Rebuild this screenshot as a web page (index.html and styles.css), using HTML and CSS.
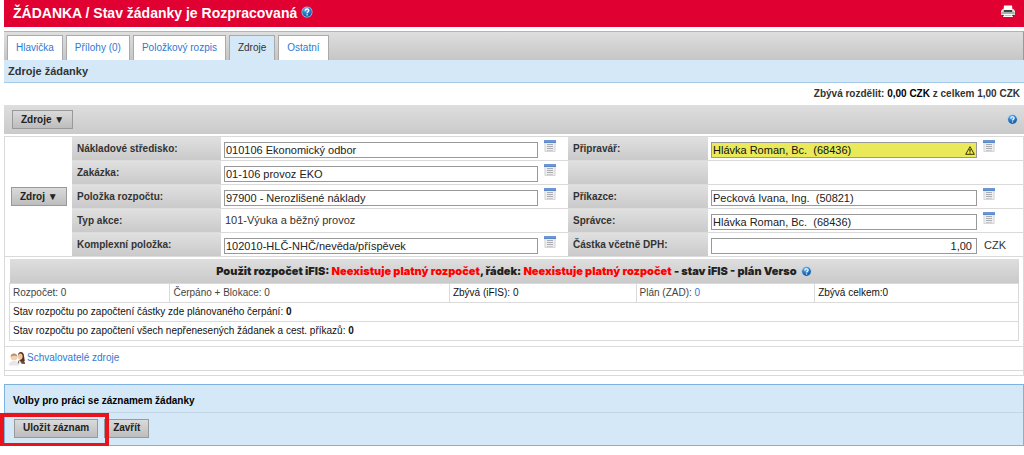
FILE: index.html
```html
<!DOCTYPE html>
<html lang="cs">
<head>
<meta charset="utf-8">
<title>Žádanka</title>
<link rel="stylesheet" href="styles.css">
</head>
<body>
<svg class="defs" aria-hidden="true">
  <defs>
    <radialGradient id="ball" cx="40%" cy="25%" r="75%">
      <stop offset="0" stop-color="#7fc0f4"/><stop offset="0.5" stop-color="#2b7fce"/><stop offset="1" stop-color="#135299"/>
    </radialGradient>
    <symbol id="help" viewBox="0 0 12 12">
      <circle cx="6" cy="6" r="5.5" fill="#a9cdea"/>
      <circle cx="6" cy="6" r="4.8" fill="url(#ball)"/>
      <path d="M4.2 4.8C4.2 2.4 7.9 2.5 7.8 4.6C7.7 5.8 6.1 5.7 6.1 7.2M6.1 8.2V9.4" fill="none" stroke="#fff" stroke-width="1.3"/>
    </symbol>
    <symbol id="list" viewBox="0 0 12 12">
      <path d="M0.5 0.5H11.5V11.5H0.5Z" fill="#eeeeec"/>
      <path d="M1 3V11.5H11V3" fill="none" stroke="#d6d6d6"/>
      <path d="M0 0H12V3H0Z" fill="#5c88cb"/><path d="M0 1H12" stroke="#7ca4dc"/>
      <path d="M3 4.5H9M3 6.5H9M3 8.5H9" stroke="#a9acb3"/><path d="M3 10.5H9" stroke="#c9c9c9"/>
    </symbol>
  </defs>
</svg>
<main class="page">
  <header class="title-bar">
    <h1>ŽÁDANKA / Stav žádanky je Rozpracovaná</h1>
    <svg class="help"><use href="#help"/></svg>
    <svg class="printer" viewBox="0 0 14 13" role="img" aria-label="Tisk">
      <path d="M3 0.5H11L11.6 5H2.4Z" fill="#fff"/>
      <path d="M1.5 4H3V5.5H11V4H12.5L14 6V10H0V6Z" fill="#d9dddb"/>
      <path d="M2.8 5H11.2V7H2.8Z" fill="#34493f"/><path d="M0.5 8H13.5" stroke="#70837a"/>
      <path d="M3 9H11L12 12H2Z" fill="#fff"/><path d="M1 10.5H2.5M11.5 10.5H13" stroke="#333"/>
      <path d="M3.5 10.5H10.5" stroke="#b9c0bc"/>
    </svg>
  </header>

  <nav class="tabs">
    <a href="#">Hlavička</a>
    <a href="#">Přílohy (0)</a>
    <a href="#">Položkový rozpis</a>
    <a href="#" class="active" aria-current="page">Zdroje</a>
    <a href="#">Ostatní</a>
  </nav>
  <h2 class="section-title">Zdroje žádanky</h2>
  <p class="remaining">Zbývá rozdělit: <b>0,00 CZK</b> z celkem 1,00 CZK</p>

  <div class="toolbar">
    <button type="button" class="btn">Zdroje ▼</button>
    <svg class="help small"><use href="#help"/></svg>
  </div>

  <section class="sources">
    <div class="form">
      <div class="menu-cell"><button type="button" class="btn">Zdroj ▼</button></div>
      <div class="fields">
        <label class="label" for="f1">Nákladové středisko:</label>
        <div class="value"><input id="f1" type="text" value="010106 Ekonomický odbor"><svg class="list"><use href="#list"/></svg></div>
        <label class="label" for="f2">Připravář:</label>
        <div class="value person"><span class="warned"><input id="f2" class="warning" type="text" value="Hlávka Roman, Bc.  (68436)"><svg class="warn" viewBox="0 0 10 9"><path d="M5 0.7L9.3 8.3H0.7Z" fill="#f4ee3c" stroke="#333010" stroke-linejoin="round"/><path d="M5 3V5.8M5 6.4V7.6" stroke="#222" stroke-width="1.2"/></svg></span><svg class="list"><use href="#list"/></svg></div>

        <label class="label" for="f3">Zakázka:</label>
        <div class="value"><input id="f3" type="text" value="01-106 provoz EKO"><svg class="list"><use href="#list"/></svg></div>
        <div class="label"></div>
        <div class="value person"></div>

        <label class="label" for="f4">Položka rozpočtu:</label>
        <div class="value"><input id="f4" type="text" value="97900 - Nerozlišené náklady"><svg class="list"><use href="#list"/></svg></div>
        <label class="label" for="f5">Příkazce:</label>
        <div class="value person"><input id="f5" type="text" value="Pecková Ivana, Ing.  (50821)"><svg class="list"><use href="#list"/></svg></div>

        <div class="label">Typ akce:</div>
        <div class="value plain">101-Výuka a běžný provoz</div>
        <label class="label" for="f6">Správce:</label>
        <div class="value person"><input id="f6" type="text" value="Hlávka Roman, Bc.  (68436)"><svg class="list"><use href="#list"/></svg></div>

        <label class="label" for="f7">Komplexní položka:</label>
        <div class="value"><input id="f7" type="text" value="102010-HLČ-NHČ/nevěda/příspěvek"><svg class="list"><use href="#list"/></svg></div>
        <label class="label" for="f8">Částka včetně DPH:</label>
        <div class="value person"><input id="f8" class="amount" type="text" value="1,00"><span class="unit">CZK</span></div>
      </div>
    </div>

    <div class="budget-wrap">
      <table class="budget">
        <colgroup><col class="c1"><col class="c2"><col class="c3"><col class="c4"><col></colgroup>
        <thead>
          <tr><th colspan="5">Použit rozpočet iFIS: <em>Neexistuje platný rozpočet</em>, řádek: <em>Neexistuje platný rozpočet</em> - stav iFIS - plán Verso <svg class="help small"><use href="#help"/></svg></th></tr>
        </thead>
        <tbody>
          <tr>
            <td class="muted">Rozpočet: 0</td>
            <td class="muted">Čerpáno + Blokace: 0</td>
            <td>Zbývá (iFIS): 0</td>
            <td class="muted">Plán (ZAD): <a href="#">0</a></td>
            <td>Zbývá celkem:0</td>
          </tr>
          <tr><td colspan="5">Stav rozpočtu po započtení částky zde plánovaného čerpání: <b>0</b></td></tr>
          <tr><td colspan="5">Stav rozpočtu po započtení všech nepřenesených žádanek a cest. příkazů: <b>0</b></td></tr>
        </tbody>
      </table>
    </div>

    <div class="approvers">
      <svg class="people" viewBox="0 0 17 15">
        <path d="M0 14.5C0 11 2 10 5 10S10 11 10.5 14.5Z" fill="#e8e6e8"/>
        <circle cx="5" cy="6" r="3.4" fill="#f3d2b4"/><path d="M1.6 6C1.5 1.5 8 1 8.4 6C7 4.2 4 4.3 1.6 6Z" fill="#b9936f"/>
        <path d="M9 12.5C8.7 9.4 10.3 8.7 12 8.7S16 9.5 16 13Z" fill="#6d4a3e"/>
        <path d="M9 5C8.5 0 15 -0.5 15 5L15.8 10H12Z" fill="#573120"/><ellipse cx="11.3" cy="5.6" rx="2.3" ry="3.1" fill="#f0c7a2"/>
        <path d="M10.5 9L12.8 13H9.5Z" fill="#f4efed"/>
      </svg><a href="#">Schvalovatelé zdroje</a>
    </div>
    <div class="sources-end"></div>
  </section>

  <section class="actions">
    <h3>Volby pro práci se záznamem žádanky</h3>
    <div class="action-row">
      <div class="save"><button type="button" class="btn">Uložit záznam</button><span class="marker"></span></div>
      <button type="button" class="btn close">Zavřít</button>
    </div>
  </section>
</main>
</body>
</html>
```

FILE: styles.css
```css
* { box-sizing: border-box; }
body {
  margin: 0;
  background: #fff;
  color: #333;
  font: 10px/14px "Liberation Sans", Arial, sans-serif;
}
h1, h2, h3, p { margin: 0; }
a { color: #2f78d2; text-decoration: none; }
svg { display: block; flex: none; }
.defs { position: absolute; width: 0; height: 0; }
.page { padding-left: 4px; }

.title-bar {
  display: flex;
  align-items: center;
  height: 27px;
  padding: 0 9px;
  background: #e10032;
  color: #fff;
}
.title-bar h1 { font-size: 14px; line-height: 27px; }
.help { width: 12px; height: 12px; margin-left: 4px; }
.small { width: 11px; height: 11px; }
.title-bar .help { margin-bottom: 4px; }
.printer { width: 14px; height: 13px; margin-left: auto; margin-bottom: 4px; }

.tabs {
  display: flex;
  gap: 3px;
  margin-top: 4px;
  padding: 3px 3px 0;
  border-top: 1px solid #b3b3b3;
  border-right: 1px solid #999;
  background: linear-gradient(#dedede, #c6c6c6);
}
.tabs a {
  padding: 5px 8px;
  border: 1px solid #aaa;
  border-bottom: 0;
  background: #fff;
}
.tabs .active { background: #d4e8f8; color: #333; }

.section-title {
  height: 23px;
  padding: 4px;
  border-bottom: 1px solid #a6cbe9;
  background: #d4e8f8;
  font-size: 11px;
}
.remaining { padding: 4px 4px; font-weight: bold; text-align: right; }
.remaining b { color: #000; }

.btn {
  height: 19px;
  padding: 0 8px;
  border: 1px solid #999;
  background: linear-gradient(#dadada, #bdbdbd);
  color: #222;
  font: bold 10px/14px "Liberation Sans", Arial, sans-serif;
  white-space: nowrap;
}
.toolbar {
  display: flex;
  align-items: center;
  justify-content: space-between;
  height: 29px;
  padding: 0 6px 0 8px;
  background: linear-gradient(#dedede, #cacaca);
}

.sources { margin-top: 2px; border: 1px solid #dadada; }
.form { display: grid; grid-template-columns: 67px 1fr; }
.menu-cell { display: flex; align-items: center; padding-left: 6px; border-bottom: 1px solid #dadada; }
.fields { display: grid; grid-template-columns: 149fr 347fr 140fr 315fr; grid-auto-rows: 24px; }
.label {
  padding: 5px 5px 4px;
  border-bottom: 1px solid #dcdcdc;
  background: linear-gradient(#e0e0e0, #cacaca);
  color: #333;
  font-weight: bold;
}
.value {
  display: flex;
  align-items: flex-start;
  gap: 6px;
  padding: 3px 12px 0 3px;
  border-bottom: 1px solid #dadada;
}
.value.plain { padding: 4px 4px; font-size: 11px; }
.value.person { padding-right: 28px; }
.value input {
  flex: 1;
  min-width: 0;
  width: 100%;
  height: 16px;
  margin-top: 2px;
  padding: 0 1px;
  border: 1px solid #999;
  background: #fff;
  color: #222;
  font: 11px/14px "Liberation Sans", Arial, sans-serif;
  white-space: pre;
}
.value .warning { background: #e9e95a; color: #111; }
.value .amount { padding-right: 4px; text-align: right; }
.warned { position: relative; display: flex; flex: 1; }
.warn { position: absolute; right: 2px; top: 6px; width: 10px; height: 9px; }
.list { width: 12px; height: 12px; }
.unit { width: 12px; padding: 2px 1px; font-size: 11px; }

.budget-wrap { padding: 2px 4px 5px; border-bottom: 1px solid #dadada; }
.budget { width: 100%; border-collapse: collapse; table-layout: fixed; color: #111; }
.budget th {
  height: 24px;
  padding: 0;
  background: linear-gradient(#dedede, #cacaca);
  color: #222;
  font: 900 11px/14px Inter, Arial, sans-serif;
}
.budget th em { color: #f00; font-style: normal; }
.budget th .help { display: inline-block; margin-left: 2px; vertical-align: -2px; }
.budget td { padding: 2px 3px; border: 1px solid #dadada; }
.budget .muted { color: #444; }
.c1 { width: 15.9%; }
.c2 { width: 27.7%; }
.c3 { width: 18.5%; }
.c4 { width: 17.7%; }

.approvers {
  display: flex;
  align-items: center;
  height: 24px;
  padding-left: 4px;
  border-bottom: 1px solid #dadada;
}
.people { width: 17px; height: 15px; margin-right: 1px; }
.sources-end { height: 4px; }

.actions {
  margin-top: 8px;
  border: 1px solid #7fb2e0;
  background: #d4e8f8;
}
.actions h3 {
  padding: 9px 8px 4px;
  border-bottom: 1px solid #c3d5e4;
  color: #000;
  font-size: 10px;
}
.action-row { display: flex; gap: 6px; padding: 6px 9px 7px; }
.save { position: relative; display: flex; }
.marker {
  position: absolute;
  inset: -6px -11px -9px -14px;
  border: 4px solid #e8131b;
}
```
